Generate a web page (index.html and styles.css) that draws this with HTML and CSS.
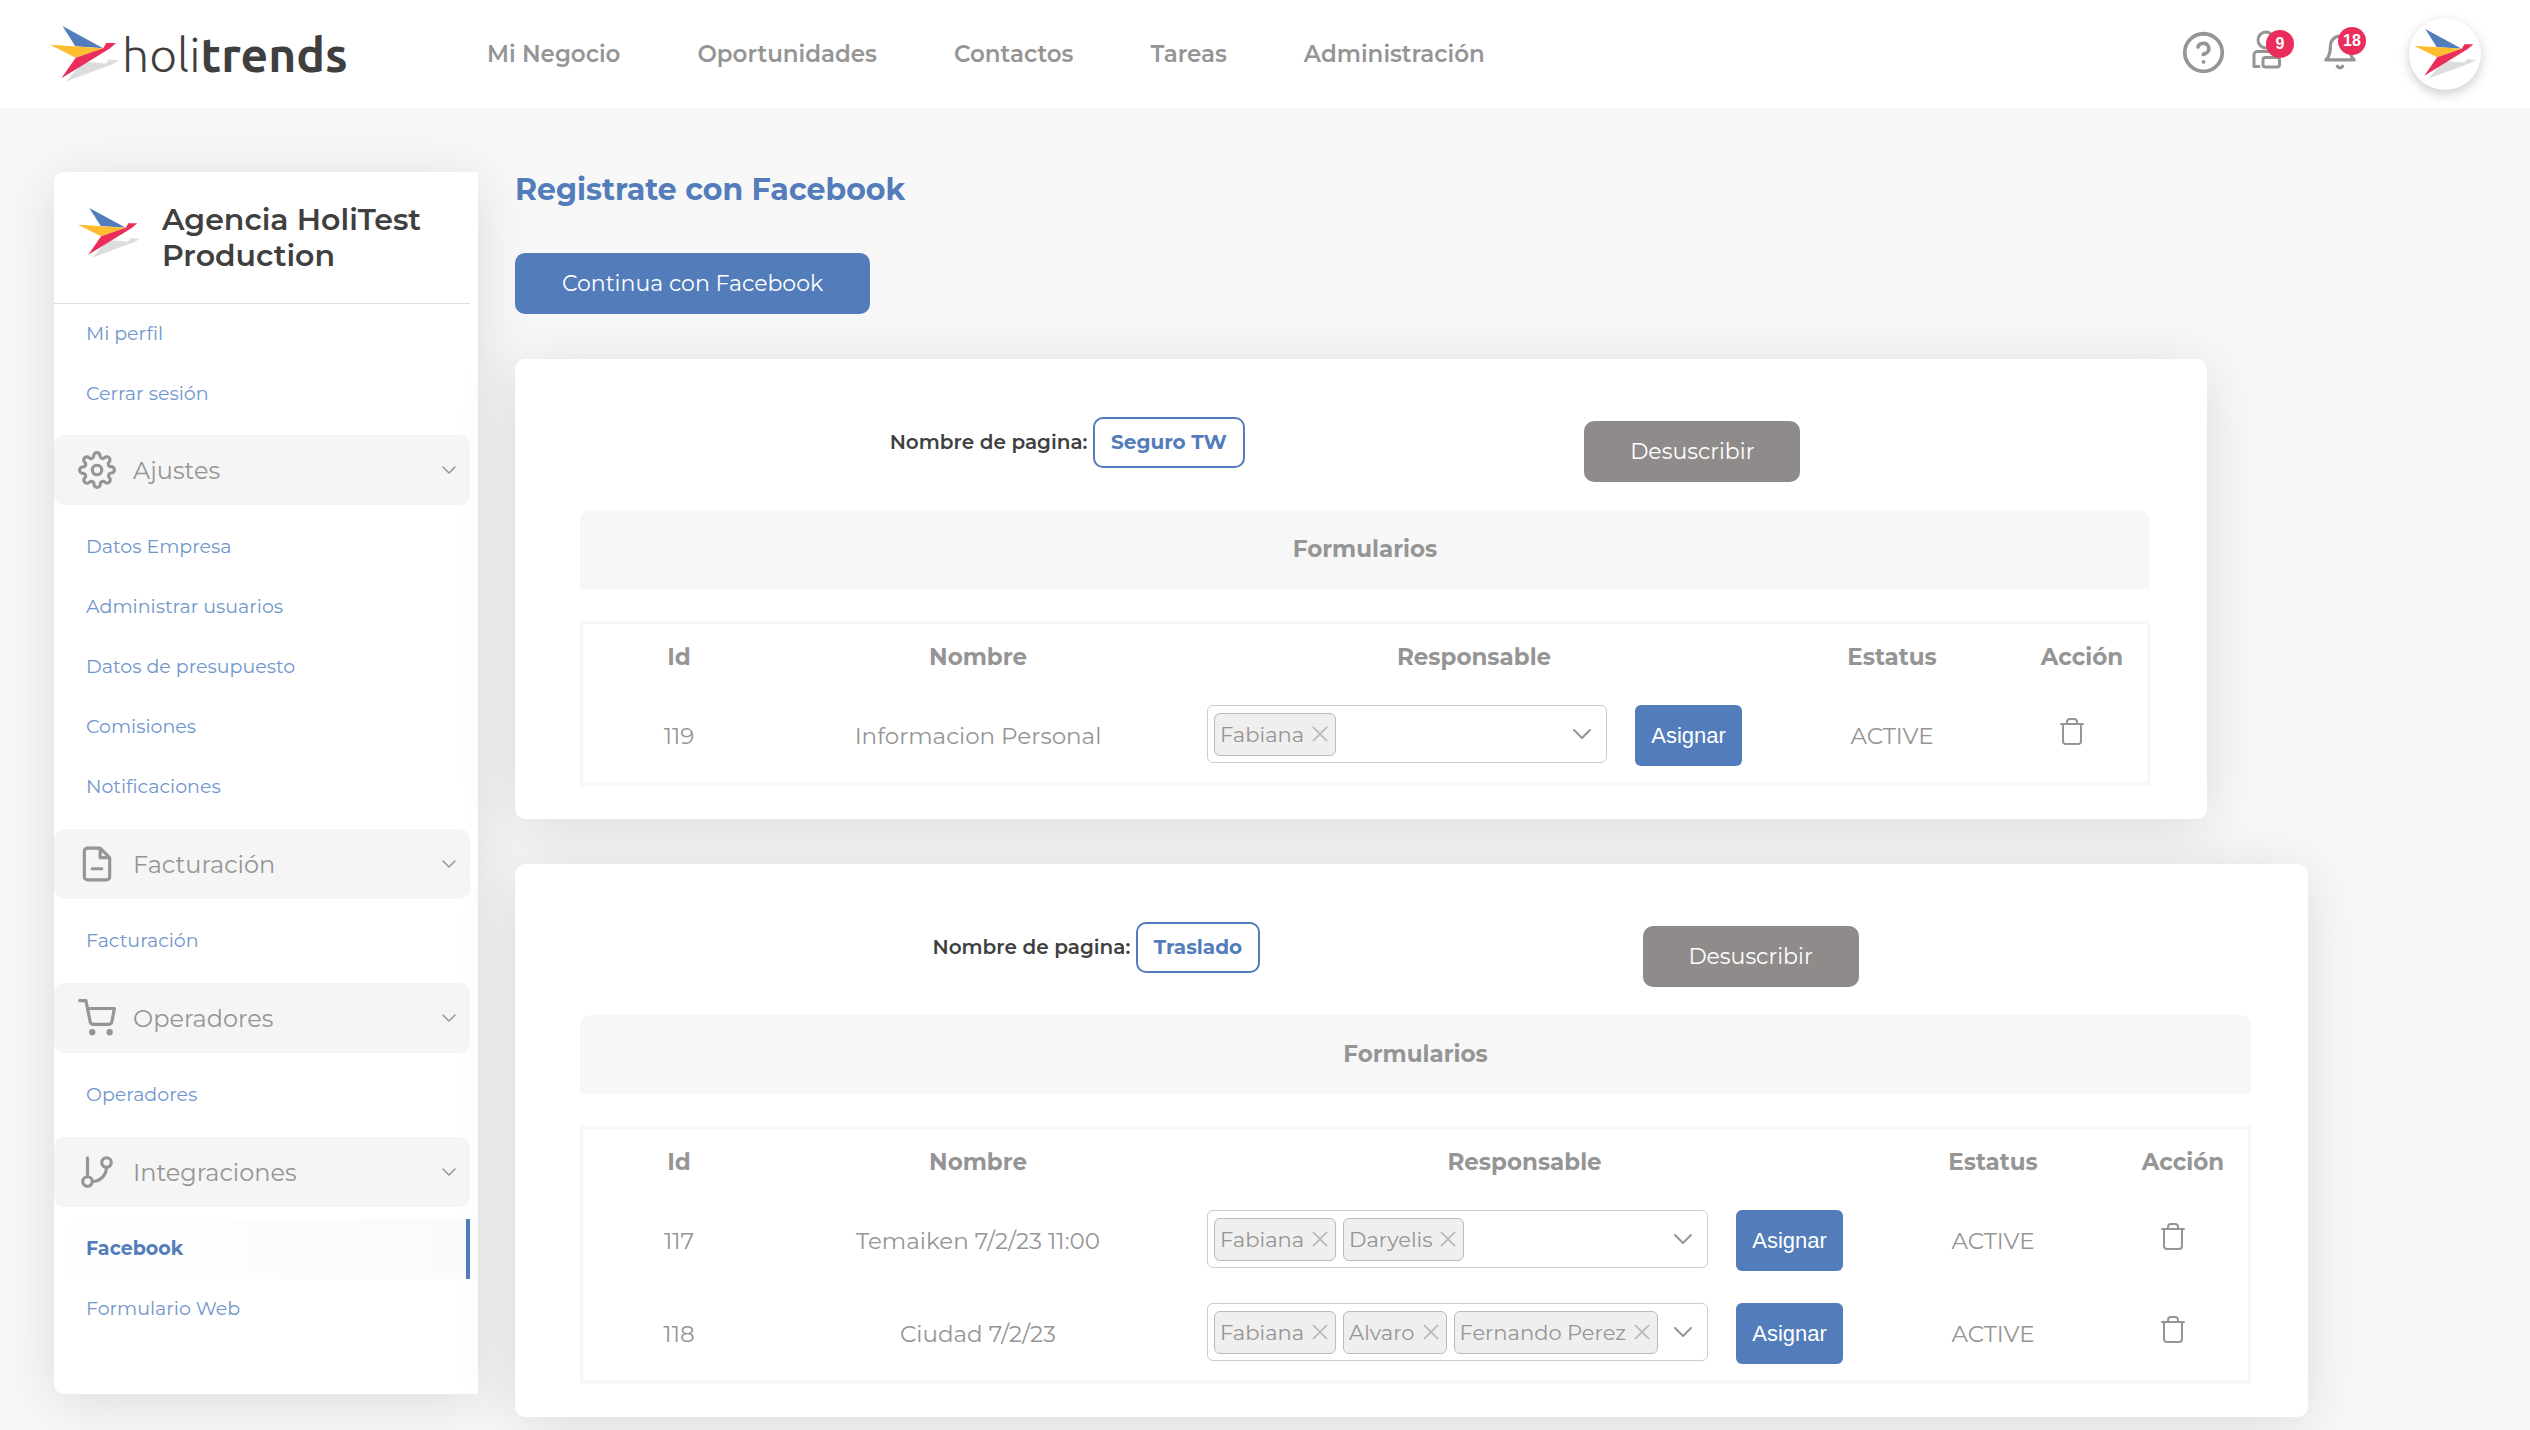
FILE: index.html
```html
<!DOCTYPE html>
<html lang="es">
<head>
<meta charset="utf-8">
<title>Holitrends - Facebook</title>
<link rel="stylesheet" href="styles.css">
</head>
<body>
<svg class="defs" aria-hidden="true">
  <symbol id="bird" viewBox="0 0 188 152">
    <path fill="#dcddde" d="M43 151 91 97 153 102 160 91 188 94 170 104Z"/>
    <path fill="#527cba" d="M34 0 145 60 69 55Z"/>
    <path fill="#fdbd2e" d="M0 51 145 60 70 86Z"/>
    <path fill="#eb2d5b" d="M70 86 145 60 153 46 180 46 163 61 31 142Z"/>
  </symbol>
  <symbol id="chevron" viewBox="0 0 24 24"><path d="m4 8 8 8 8-8"/></symbol>
  <symbol id="cross" viewBox="0 0 24 24"><path d="m4 4 16 16M20 4 4 20"/></symbol>
  <symbol id="trash" viewBox="0 0 24 28"><path d="M1 6h22M3 6v17a3 3 0 0 0 3 3h12a3 3 0 0 0 3-3V6M7 6V4a3 3 0 0 1 3-3h4a3 3 0 0 1 3 3v2"/></symbol>
</svg>

<header class="topbar">
  <a class="brand" href="#" aria-label="holitrends">
    <svg class="brand-bird"><use href="#bird"/></svg>
    <span class="brand-name">holi<b>trends</b></span>
  </a>
  <nav class="mainnav">
    <a href="#">Mi Negocio</a>
    <a href="#">Oportunidades</a>
    <a href="#">Contactos</a>
    <a href="#">Tareas</a>
    <a href="#">Administración</a>
  </nav>
  <div class="tools">
    <button class="tool" type="button" aria-label="Ayuda">
      <svg viewBox="0 0 24 24"><circle cx="12" cy="12" r="10"/><path d="M9.1 9a3 3 0 0 1 5.8 1c0 2-3 3-3 3M12 17h.01"/></svg>
    </button>
    <button class="tool people" type="button" aria-label="Contactos nuevos">
      <svg viewBox="0 0 45 45"><circle cx="15" cy="10" r="8"/><path d="M8 36.500H3V25a3.500 3.500 0 0 1 3.500-3.500h15a3.500 3.500 0 0 1 3.500 3.500v2"/><rect x="12" y="27.500" width="16.500" height="9.500" rx="2.500"/></svg>
      <span class="count">9</span>
    </button>
    <button class="tool bell" type="button" aria-label="Notificaciones">
      <svg viewBox="0 0 24 24"><path d="M18 8A6 6 0 0 0 6 8c0 7-3 9-3 9h18s-3-2-3-9M13.730 21a2 2 0 0 1-3.460 0"/></svg>
      <span class="count">18</span>
    </button>
    <a class="avatar" href="#" aria-label="Perfil"><svg><use href="#bird"/></svg></a>
  </div>
</header>

<div class="layout">
  <aside class="sidebar">
    <div class="agency">
      <svg class="agency-bird"><use href="#bird"/></svg>
      <h2>Agencia HoliTest Production</h2>
    </div>
    <ul class="menu menu-first">
      <li><a href="#">Mi perfil</a></li>
      <li><a href="#">Cerrar sesión</a></li>
    </ul>
    <button class="group" type="button">
      <svg class="group-icon" viewBox="0 0 24 24"><circle cx="12" cy="12" r="3"/><path d="M19.400 15a1.650 1.650 0 0 0 .33 1.820l.06.06a2 2 0 0 1-2.830 2.830l-.06-.06a1.650 1.650 0 0 0-2.820 1.170V21a2 2 0 0 1-4 0v-.09a1.650 1.650 0 0 0-2.900-1.180l-.06.06a2 2 0 0 1-2.830-2.830l.06-.06a1.650 1.650 0 0 0-1.170-2.820H3a2 2 0 0 1 0-4h.09a1.650 1.650 0 0 0 1.180-2.900l-.06-.06a2 2 0 0 1 2.830-2.830l.06.06a1.650 1.650 0 0 0 2.820-1.170V3a2 2 0 0 1 4 0v.09a1.650 1.650 0 0 0 2.820 1.170l.06-.06a2 2 0 0 1 2.830 2.830l-.06.06a1.650 1.650 0 0 0 1.170 2.820H21a2 2 0 0 1 0 4h-.09a1.650 1.650 0 0 0-1.510 1.090Z"/></svg>
      <span>Ajustes</span>
      <svg class="chev"><use href="#chevron"/></svg>
    </button>
    <ul class="menu">
      <li><a href="#">Datos Empresa</a></li>
      <li><a href="#">Administrar usuarios</a></li>
      <li><a href="#">Datos de presupuesto</a></li>
      <li><a href="#">Comisiones</a></li>
      <li><a href="#">Notificaciones</a></li>
    </ul>
    <button class="group" type="button">
      <svg class="group-icon" viewBox="0 0 24 24"><path d="M14 2H6a2 2 0 0 0-2 2v16a2 2 0 0 0 2 2h12a2 2 0 0 0 2-2V8L14 2v6h6M9 15h6"/></svg>
      <span>Facturación</span>
      <svg class="chev"><use href="#chevron"/></svg>
    </button>
    <ul class="menu">
      <li><a href="#">Facturación</a></li>
    </ul>
    <button class="group" type="button">
      <svg class="group-icon" viewBox="0 0 24 24"><circle cx="9" cy="21" r="1"/><circle cx="20" cy="21" r="1"/><path d="M1 1h4l2.680 13.390a2 2 0 0 0 2 1.610h9.720a2 2 0 0 0 2-1.610L23 6H6"/></svg>
      <span>Operadores</span>
      <svg class="chev"><use href="#chevron"/></svg>
    </button>
    <ul class="menu">
      <li><a href="#">Operadores</a></li>
    </ul>
    <button class="group" type="button">
      <svg class="group-icon" viewBox="0 0 24 24"><path d="M6 3v12M18 9a9 9 0 0 1-9 9"/><circle cx="18" cy="6" r="3"/><circle cx="6" cy="18" r="3"/></svg>
      <span>Integraciones</span>
      <svg class="chev"><use href="#chevron"/></svg>
    </button>
    <ul class="menu">
      <li><a class="current" href="#" aria-current="page">Facebook</a></li>
      <li><a href="#">Formulario Web</a></li>
    </ul>
  </aside>

  <main class="content">
    <h1>Registrate con Facebook</h1>
    <button class="btn btn-primary" type="button">Continua con Facebook</button>

    <section class="card">
      <div class="page-row">
        <p class="page-name">Nombre de pagina: <span class="badge">Seguro TW</span></p>
        <button class="btn btn-muted" type="button">Desuscribir</button>
      </div>
      <h3 class="bar">Formularios</h3>
      <table class="forms">
        <thead>
          <tr><th class="c-id">Id</th><th class="c-name">Nombre</th><th>Responsable</th><th class="c-status">Estatus</th><th class="c-action">Acción</th></tr>
        </thead>
        <tbody>
          <tr>
            <td>119</td>
            <td>Informacion Personal</td>
            <td>
              <div class="assign">
                <div class="multi" role="combobox" aria-label="Responsable" aria-expanded="false" tabindex="0">
                  <span class="tag">Fabiana <button type="button" aria-label="Quitar Fabiana"><svg><use href="#cross"/></svg></button></span>
                  <svg class="open"><use href="#chevron"/></svg>
                </div>
                <button class="btn-assign" type="button">Asignar</button>
              </div>
            </td>
            <td>ACTIVE</td>
            <td class="action"><button type="button" aria-label="Eliminar"><svg><use href="#trash"/></svg></button></td>
          </tr>
        </tbody>
      </table>
    </section>

    <section class="card">
      <div class="page-row">
        <p class="page-name">Nombre de pagina: <span class="badge">Traslado</span></p>
        <button class="btn btn-muted" type="button">Desuscribir</button>
      </div>
      <h3 class="bar">Formularios</h3>
      <table class="forms">
        <thead>
          <tr><th class="c-id">Id</th><th class="c-name">Nombre</th><th>Responsable</th><th class="c-status">Estatus</th><th class="c-action">Acción</th></tr>
        </thead>
        <tbody>
          <tr>
            <td>117</td>
            <td>Temaiken 7/2/23 11:00</td>
            <td>
              <div class="assign">
                <div class="multi" role="combobox" aria-label="Responsable" aria-expanded="false" tabindex="0">
                  <span class="tag">Fabiana <button type="button" aria-label="Quitar Fabiana"><svg><use href="#cross"/></svg></button></span>
                  <span class="tag">Daryelis <button type="button" aria-label="Quitar Daryelis"><svg><use href="#cross"/></svg></button></span>
                  <svg class="open"><use href="#chevron"/></svg>
                </div>
                <button class="btn-assign" type="button">Asignar</button>
              </div>
            </td>
            <td>ACTIVE</td>
            <td class="action"><button type="button" aria-label="Eliminar"><svg><use href="#trash"/></svg></button></td>
          </tr>
          <tr>
            <td>118</td>
            <td>Ciudad 7/2/23</td>
            <td>
              <div class="assign">
                <div class="multi" role="combobox" aria-label="Responsable" aria-expanded="false" tabindex="0">
                  <span class="tag">Fabiana <button type="button" aria-label="Quitar Fabiana"><svg><use href="#cross"/></svg></button></span>
                  <span class="tag">Alvaro <button type="button" aria-label="Quitar Alvaro"><svg><use href="#cross"/></svg></button></span>
                  <span class="tag">Fernando Perez <button type="button" aria-label="Quitar Fernando Perez"><svg><use href="#cross"/></svg></button></span>
                  <svg class="open"><use href="#chevron"/></svg>
                </div>
                <button class="btn-assign" type="button">Asignar</button>
              </div>
            </td>
            <td>ACTIVE</td>
            <td class="action"><button type="button" aria-label="Eliminar"><svg><use href="#trash"/></svg></button></td>
          </tr>
        </tbody>
      </table>
    </section>
  </main>
</div>
</body>
</html>
```
FILE: styles.css
```css
:root {
  --blue: #527cba;
  --red: #eb2d5b;
  --gray: #959595;
  --dark: #3f3f3f;
  --page: #f8f8f8;
}

* { box-sizing: border-box; }

body {
  margin: 0;
  background: var(--page);
  color: var(--gray);
  font-family: Montserrat, Inter, "Noto Sans", sans-serif;
  font-size: 23px;
}

a { color: inherit; text-decoration: none; }
h1, h2, h3, p, ul { margin: 0; padding: 0; }
ul { list-style: none; }

button {
  padding: 0;
  border: 0;
  background: none;
  color: inherit;
  font: inherit;
  cursor: pointer;
}

svg {
  display: block;
  fill: none;
  stroke: currentColor;
  stroke-width: 2;
  stroke-linecap: round;
  stroke-linejoin: round;
}

.defs { display: none; }
#bird { stroke: none; }

/* top bar */
.topbar {
  display: flex;
  align-items: center;
  height: 108px;
  padding: 0 49px 0 50px;
  background: #fff;
}

.brand {
  display: flex;
  align-items: center;
  gap: 3px;
  width: 437px;
  color: var(--dark);
}

.brand-bird { width: 69px; height: 56px; }

.brand-name {
  font-family: Ubuntu, "Open Sans", "Noto Sans", sans-serif;
  font-size: 48px;
  font-weight: 300;
  line-height: 60px;
}

.brand-name b { font-weight: 700; }

.mainnav {
  display: flex;
  gap: 77px;
  font-size: 23px;
  font-weight: 600;
}

.tools {
  display: flex;
  align-items: center;
  gap: 25px;
  margin-left: auto;
}

.tool { position: relative; margin-bottom: 4px; }
.tool svg { width: 45px; height: 45px; }
.people svg { stroke-width: 3; }
.bell svg { width: 38px; height: 38px; }

.count {
  position: absolute;
  top: 0;
  right: 2px;
  width: 28px;
  height: 28px;
  border-radius: 50%;
  background: var(--red);
  color: #fff;
  font: 700 16px/28px "Liberation Sans", Arial, sans-serif;
}

.bell .count { top: -6px; right: -7px; }

.avatar {
  display: grid;
  place-items: center;
  width: 72px;
  height: 72px;
  margin-left: 25px;
  border-radius: 50%;
  background: #fff;
  box-shadow: 0 4px 12px rgba(0, 0, 0, .2);
}

.avatar svg { width: 62px; height: 50px; }

/* page columns */
.layout {
  display: flex;
  align-items: flex-start;
  gap: 37px;
  padding: 64px 48px 13px 54px;
}

.sidebar {
  flex: 0 0 424px;
  padding: 0 8px 43px 0;
  border-radius: 10px 0 0 10px;
  background: #fff;
  box-shadow: 0 8px 60px rgba(0, 0, 0, .12);
}

.agency {
  display: flex;
  gap: 22px;
  height: 132px;
  padding: 30px 20px 0 24px;
  border-bottom: 1px solid #dbdfe5;
  color: var(--dark);
}

.agency-bird {
  flex: none;
  width: 62px;
  height: 50px;
  margin-top: 6px;
}

.agency h2 {
  font-size: 30px;
  font-weight: 600;
  line-height: 36px;
}

.menu {
  padding: 12px 0;
  color: #7096cc;
  font-size: 19px;
}

.menu-first { padding: 0 0 11px; }

.menu a {
  display: flex;
  align-items: center;
  height: 60px;
  padding: 0 0 2px 32px;
}

.menu .current {
  border-right: 4px solid var(--blue);
  background: linear-gradient(90deg, #fff, #fafafa);
  color: var(--blue);
  font-weight: 700;
}

.group {
  display: flex;
  align-items: center;
  gap: 17px;
  width: 100%;
  height: 70px;
  padding: 0 12px 0 24px;
  border-radius: 10px;
  background: #f5f5f5;
  font-size: 24px;
}

.group-icon { width: 38px; height: 38px; }

.chev {
  width: 18px;
  height: 18px;
  margin-left: auto;
}

/* main column */
.content { flex: 1; min-width: 0; }

h1 {
  color: var(--blue);
  font-size: 30px;
  font-weight: 700;
  line-height: 36px;
}

.btn {
  height: 61px;
  border-radius: 10px;
  color: #fff;
  font-size: 22px;
}

.btn-primary {
  display: block;
  width: 355px;
  margin-top: 45px;
  background: var(--blue);
}

.btn-muted {
  width: 216px;
  margin-top: 4px;
  background: #8f8b8a;
}

.card {
  width: fit-content;
  margin-top: 45px;
  padding-bottom: 33px;
  border-radius: 10px;
  background: #fff;
  box-shadow: 0 8px 60px rgba(0, 0, 0, .12);
}

.page-row {
  display: flex;
  justify-content: space-evenly;
  align-items: flex-start;
  padding: 58px 67px 28px 35px;
}

.page-name {
  color: var(--dark);
  font-size: 20px;
  font-weight: 600;
  line-height: 51px;
}

.badge {
  display: inline-block;
  padding: 0 16px;
  border: 2px solid var(--blue);
  border-radius: 10px;
  color: var(--blue);
  font-weight: 700;
  line-height: 47px;
}

.bar {
  margin: 0 57px 32px 65px;
  border-radius: 10px 10px 0 0;
  background: #f7f7f7;
  font-size: 23px;
  font-weight: 700;
  line-height: 79px;
  text-align: center;
}

.forms {
  margin: 0 57px 0 65px;
  border: 3px solid #f7f7f7;
  border-bottom-width: 4px;
  border-spacing: 0;
  text-align: center;
  white-space: nowrap;
}

.forms th { height: 65px; padding: 0; font-weight: 700; }
.forms td { height: 93px; padding: 0; }
.forms .c-id { width: 192px; min-width: 192px; }
.forms .c-name { min-width: 406px; }
.forms .c-status { min-width: 250px; }
.forms .c-action { min-width: 130px; }

.assign {
  display: flex;
  align-items: flex-start;
  gap: 28px;
  padding: 0 25px 0 26px;
}

.multi {
  display: flex;
  flex: 1;
  align-items: center;
  gap: 7px;
  min-width: 400px;
  height: 58px;
  padding: 0 12px 0 6px;
  border: 1px solid #ccc;
  border-radius: 6px;
}

.tag {
  display: flex;
  align-items: center;
  gap: 6px;
  height: 43px;
  padding: 0 5px;
  border: 1px solid #bbb;
  border-radius: 6px;
  background: #efefef;
  font-size: 21px;
}

.tag svg { width: 20px; height: 20px; color: #b9b9b9; }

.open {
  box-sizing: content-box;
  width: 24px;
  height: 24px;
  margin-left: auto;
  padding-left: 6px;
}

.btn-assign {
  width: 107px;
  height: 61px;
  border-radius: 6px;
  background: var(--blue);
  color: #fff;
  font: 22px "Liberation Sans", Arial, sans-serif;
}

.forms .action { padding: 0 20px 8px 0; }
.action button { vertical-align: middle; }
.action svg { width: 24px; height: 28px; }
```
